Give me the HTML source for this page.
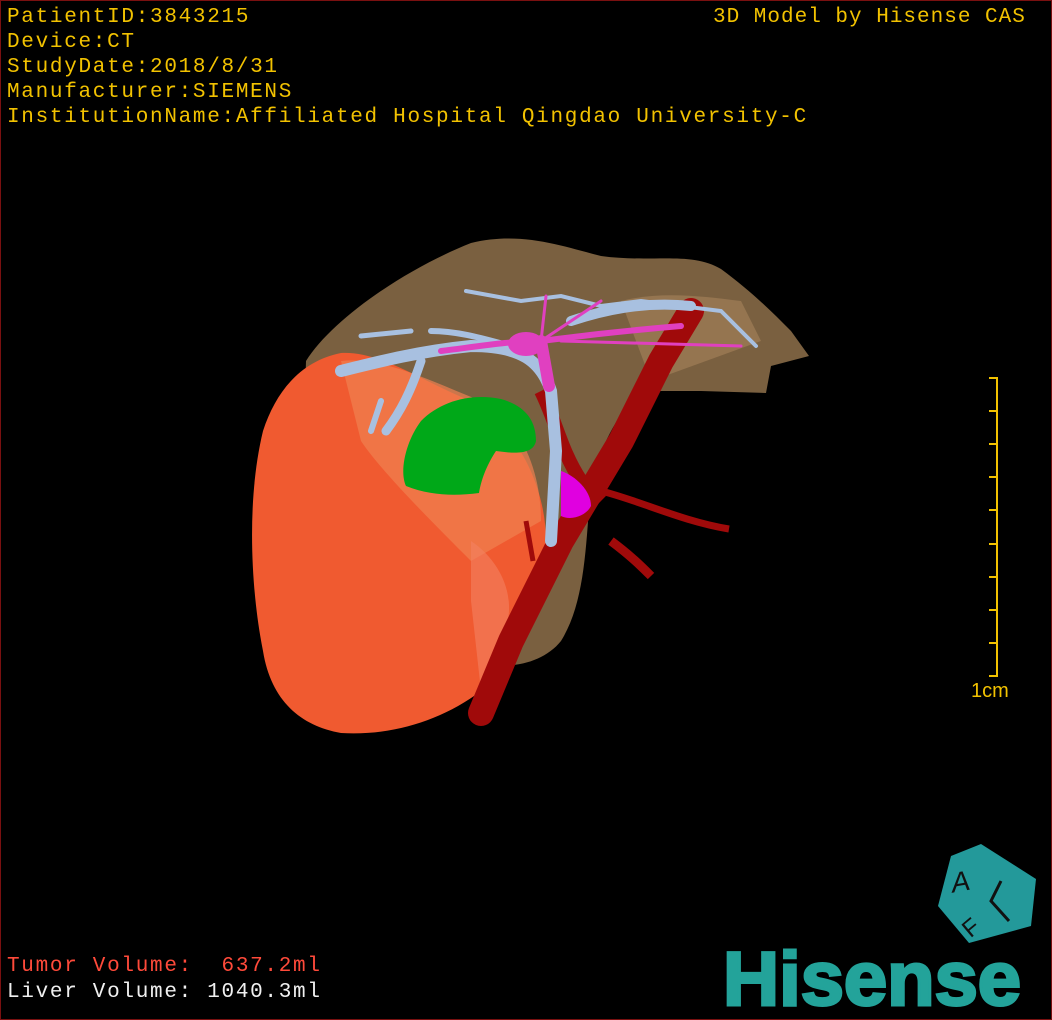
<!DOCTYPE html>
<html><head><meta charset="utf-8"><style>
html,body{margin:0;padding:0;background:#000;}
#w{position:relative;width:1050px;height:1018px;border:1px solid #7a1010;overflow:hidden;background:#000;}
.t{position:absolute;left:6px;color:#f2c200;font-family:"Liberation Mono","DejaVu Sans Mono",monospace;font-size:21px;line-height:25px;white-space:pre;letter-spacing:1.7px;}
</style></head><body><div id="w">
<svg width="1050" height="1018" style="position:absolute;left:0;top:0">
<path d="M305,360 C330,320 400,270 470,242 C520,230 560,245 600,255 C650,262 690,250 720,268 C750,290 770,310 790,330 L808,355 L770,365 L765,392 L700,390 L640,390 C610,420 600,450 590,480 C585,540 585,600 560,640 C540,665 500,670 470,660 L300,520 Z" fill="#7a6040"/>
<path d="M620,300 C660,290 700,295 740,300 L760,340 L650,380 Z" fill="#b08a60" opacity="0.5"/>
<path d="M262,430 C275,390 300,360 340,352 C380,350 420,380 470,400 C520,430 545,490 545,540 C545,600 520,650 480,690 C440,720 390,735 340,732 C300,725 270,700 262,650 C250,590 245,500 262,430 Z" fill="#f05a30"/>
<path d="M340,360 C380,355 430,380 480,400 C520,420 540,470 540,520 L470,560 C430,520 380,470 360,440 Z" fill="#f08050" opacity="0.7"/>
<path d="M470,540 C500,560 520,600 500,640 L480,690 L470,600 Z" fill="#f48060" opacity="0.6"/>
<path d="M480,712 L510,640 L560,540 L620,440 L660,360 L690,310" stroke="#a00a0a" stroke-width="26" fill="none" stroke-linecap="round"/>
<path d="M600,490 C640,500 680,520 728,528" stroke="#a00a0a" stroke-width="7" fill="none"/>
<path d="M610,540 C630,555 640,565 650,575" stroke="#a00a0a" stroke-width="9" fill="none"/>
<path d="M540,390 C555,420 560,450 580,480 L600,500" stroke="#a00a0a" stroke-width="14" fill="none"/>
<path d="M525,520 L532,560" stroke="#a00a0a" stroke-width="5" fill="none"/>
<g stroke="#a8c0e0" fill="none" stroke-linecap="round">
<path d="M340,370 C380,360 420,350 470,345 C520,345 540,360 550,390 L555,450 L550,540" stroke-width="12"/>
<path d="M420,360 C410,390 400,410 385,430" stroke-width="9"/>
<path d="M380,400 L370,430" stroke-width="6"/>
<path d="M430,330 C460,330 490,340 510,345" stroke-width="6"/>
<path d="M465,290 L520,300 L560,295 L600,305 L640,300 L720,310 L755,345" stroke-width="4"/>
<path d="M570,320 C600,310 640,300 690,305" stroke-width="10"/>
<path d="M360,335 L410,330" stroke-width="5"/>
</g>
<g stroke="#e040c0" fill="none" stroke-linecap="round">
<path d="M440,350 C480,345 510,340 540,340 C580,335 620,330 680,325" stroke-width="6"/>
<path d="M540,340 L548,385" stroke-width="12"/>
<path d="M540,340 L600,300 M540,340 L545,295 M560,340 L740,345" stroke-width="3"/>
</g>
<ellipse cx="525" cy="343" rx="18" ry="12" fill="#e040c0"/>
<path d="M560,470 C575,475 590,490 590,505 C585,515 570,520 560,515 Z" fill="#e000e0"/>
<path d="M420,420 C440,400 470,392 500,398 C525,405 535,420 535,440 C532,455 510,452 495,450 C485,465 480,480 478,492 C455,495 430,495 405,485 C398,470 405,440 420,420 Z" fill="#00a818"/>
<g stroke="#f2c200" stroke-width="2">
<path d="M996,377 L996,676"/>
<path d="M988,377 L997,377 M988,410 L997,410 M988,443 L997,443 M988,476 L997,476 M988,509 L997,509 M988,543 L997,543 M988,576 L997,576 M988,609 L997,609 M988,642 L997,642 M988,675 L997,675"/>
</g>
<text x="970" y="696" fill="#f2c200" font-family="Liberation Sans,sans-serif" font-size="20">1cm</text>
<polygon points="950,855 980,843 1035,878 1030,925 968,942 937,905" fill="#23999a"/>
<text x="950" y="890" font-family="Liberation Sans,sans-serif" font-size="28" font-style="italic" fill="#111" transform="rotate(-10 960 880)">A</text>
<path d="M1000,880 L990,900 L1008,920" stroke="#111" stroke-width="3" fill="none"/>
<text x="962" y="933" font-family="Liberation Sans,sans-serif" font-size="24" fill="#111" transform="rotate(-40 972 925)">F</text>
<text x="722" y="1004" font-family="Liberation Sans,sans-serif" font-weight="bold" font-size="76" fill="#23a39a" stroke="#23a39a" stroke-width="3" textLength="298" lengthAdjust="spacingAndGlyphs">Hisense</text>
</svg>
<div class="t" style="top:4px">PatientID:3843215
Device:CT
StudyDate:2018/8/31
Manufacturer:SIEMENS
InstitutionName:Affiliated Hospital Qingdao University-C</div>
<div class="t" style="top:4px;left:712px;letter-spacing:1px">3D Model by Hisense CAS</div>
<div class="t" style="top:953px;color:#ff4a3a">Tumor Volume:  637.2ml</div>
<div class="t" style="top:979px;color:#f0f0f0">Liver Volume: 1040.3ml</div>
</div></body></html>
